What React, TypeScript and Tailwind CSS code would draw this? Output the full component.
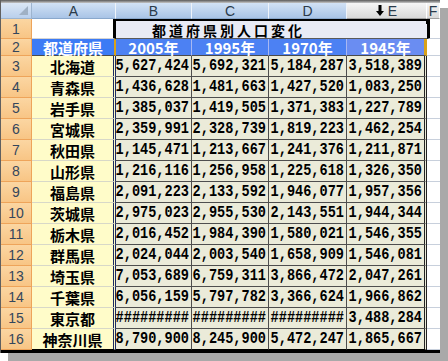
import React from "react";

type Row = [string, string, string, string, string];

const rows: Row[] = [
  ["北海道", "5,627,424", "5,692,321", "5,184,287", "3,518,389"],
  ["青森県", "1,436,628", "1,481,663", "1,427,520", "1,083,250"],
  ["岩手県", "1,385,037", "1,419,505", "1,371,383", "1,227,789"],
  ["宮城県", "2,359,991", "2,328,739", "1,819,223", "1,462,254"],
  ["秋田県", "1,145,471", "1,213,667", "1,241,376", "1,211,871"],
  ["山形県", "1,216,116", "1,256,958", "1,225,618", "1,326,350"],
  ["福島県", "2,091,223", "2,133,592", "1,946,077", "1,957,356"],
  ["茨城県", "2,975,023", "2,955,530", "2,143,551", "1,944,344"],
  ["栃木県", "2,016,452", "1,984,390", "1,580,021", "1,546,355"],
  ["群馬県", "2,024,044", "2,003,540", "1,658,909", "1,546,081"],
  ["埼玉県", "7,053,689", "6,759,311", "3,866,472", "2,047,261"],
  ["千葉県", "6,056,159", "5,797,782", "3,366,624", "1,966,862"],
  ["東京都", "#########", "#########", "#########", "3,488,284"],
  ["神奈川県", "8,790,900", "8,245,900", "5,472,247", "1,865,667"],
];

const jp = "font-['Noto_Sans_CJK_JP','Noto_Sans',sans-serif]";
const num = "font-['Liberation_Mono',monospace]";
const narrow = "font-['Liberation_Sans_Narrow','Liberation_Sans',sans-serif]";

function RowHead({ n }: { n: number }) {
  return (
    <div
      className={`flex items-center justify-center bg-gradient-to-b from-[#fbd6a2] to-[#f8c585] border-r border-b border-[#eea45a] text-[14px] leading-none text-[#34465c] ${narrow}`}
    >
      {n}
    </div>
  );
}

function ColHead({ label, selected, arrow }: { label: string; selected?: boolean; arrow?: boolean }) {
  return (
    <div
      className={`flex items-center justify-center gap-[4px] border-r border-b text-[14px] leading-none text-[#2a3a4a] ${narrow} ${
        selected
          ? "bg-gradient-to-b from-[#d2e2f5] to-[#a9c4e6] border-r-[#eef3fa] border-b-[#8aa8cc]"
          : "bg-gradient-to-b from-[#f6f6f6] to-[#d9d9d9] border-r-[#ffffff] border-b-[#a0a0a0]"
      }`}
    >
      {arrow && (
        <svg width="8" height="11" viewBox="0 0 8 11">
          <path d="M2.5 0h3v6h2.5L4 11 0 6h2.5z" fill="#000" />
        </svg>
      )}
      {label}
    </div>
  );
}

export default function App() {
  return (
    <div className="w-[448px] h-[361px] bg-white">
      <div className="w-[440px] h-[353px] flex flex-col bg-white border-l border-[#606060] shadow-[8px_8px_0_#a9a9a9]">
        <div className="h-[3px] bg-gradient-to-b from-[#5a5a5a] to-[#c8c8c8]" />
        <div className="grid grid-cols-[31px_84px_76px_77px_78px_80px_13px] grid-rows-[16px_20px_17px_repeat(14,21px)]">
          {/* column headers */}
          <div className="relative bg-gradient-to-b from-[#dbe7f6] to-[#b9cfec] border-r border-b border-[#9db4cf]">
            <svg className="absolute right-[3px] bottom-[3px]" width="9" height="9" viewBox="0 0 9 9">
              <path d="M9 0V9H0z" fill="#9fb0c4" />
            </svg>
          </div>
          <ColHead label="A" selected />
          <ColHead label="B" selected />
          <ColHead label="C" selected />
          <ColHead label="D" selected />
          <ColHead label="E" arrow />
          <ColHead label="F" />

          {/* row 1 */}
          <RowHead n={1} />
          <div className="bg-white border-r-[3px] border-r-black border-b border-b-[#d4d4d4]" />
          <div className="col-span-4 relative flex items-center bg-[#e9ebf5] border-t-2 border-black border-b border-b-[#5a5a5a]">
            <span className={`pl-[36px] text-[14px] leading-none font-bold tracking-[3px] text-black ${jp}`}>都道府県別人口変化</span>
            <div className="absolute right-[-3px] top-[-2px] w-[4px] h-[5px] bg-black" />
          </div>
          <div className="border-l-[3px] border-l-black bg-white border-b border-b-[#c8d0dc]" />

          {/* row 2 */}
          <RowHead n={2} />
          <div className={`flex items-center justify-center bg-[#3c7bf5] border-r-[2px] border-r-[#d9a21a] border-b border-b-[#4a4a4a] text-white text-[15px] leading-none font-bold ${jp}`}>
            都道府県
          </div>
          {["2005年", "1995年", "1970年", "1945年"].map((y, i) => (
            <div
              key={y}
              className={`flex items-center justify-center border-b border-b-[#4a4a4a] text-white text-[15px] leading-none font-bold ${jp} ${
                i === 3 ? "bg-[#6a8df2] border-r-[3px] border-r-[#d9a21a]" : "bg-[#4c81f3] border-r border-r-[#a8b8f2]"
              }`}
            >
              {y}
            </div>
          ))}
          <div className="bg-white border-b border-[#c8d0dc]" />

          {/* data rows */}
          {rows.map((r, ri) => (
            <React.Fragment key={r[0]}>
              <RowHead n={ri + 3} />
              <div
                className={`flex items-center justify-center bg-[#fffcc9] border-r-[3px] border-double border-r-[#1c2a62] border-b ${
                  ri === rows.length - 1 ? "border-b-black" : "border-b-[#d8d8c8]"
                } text-black text-[15px] leading-none font-bold ${jp}`}
              >
                {r[0]}
              </div>
              {r.slice(1).map((v, ci) => (
                <div
                  key={ci}
                  className={`flex items-center justify-end pr-[2px] bg-[#ebebd9] border-b ${
                    ri === rows.length - 1 ? "border-b-black" : "border-b-[#4e4e4e]"
                  } ${
                    ci === 3 ? "border-r-[3px] border-double border-r-[#222]" : "border-r border-r-[#4e4e4e]"
                  } text-black text-[13.6px] leading-none font-bold ${num}`}
                >
                  <span className="inline-block scale-y-[1.2]">{v}</span>
                </div>
              ))}
              <div className="bg-white border-b border-[#c8d0dc]" />
            </React.Fragment>
          ))}
        </div>
        <div className="h-[3px] bg-black" />
      </div>
    </div>
  );
}
